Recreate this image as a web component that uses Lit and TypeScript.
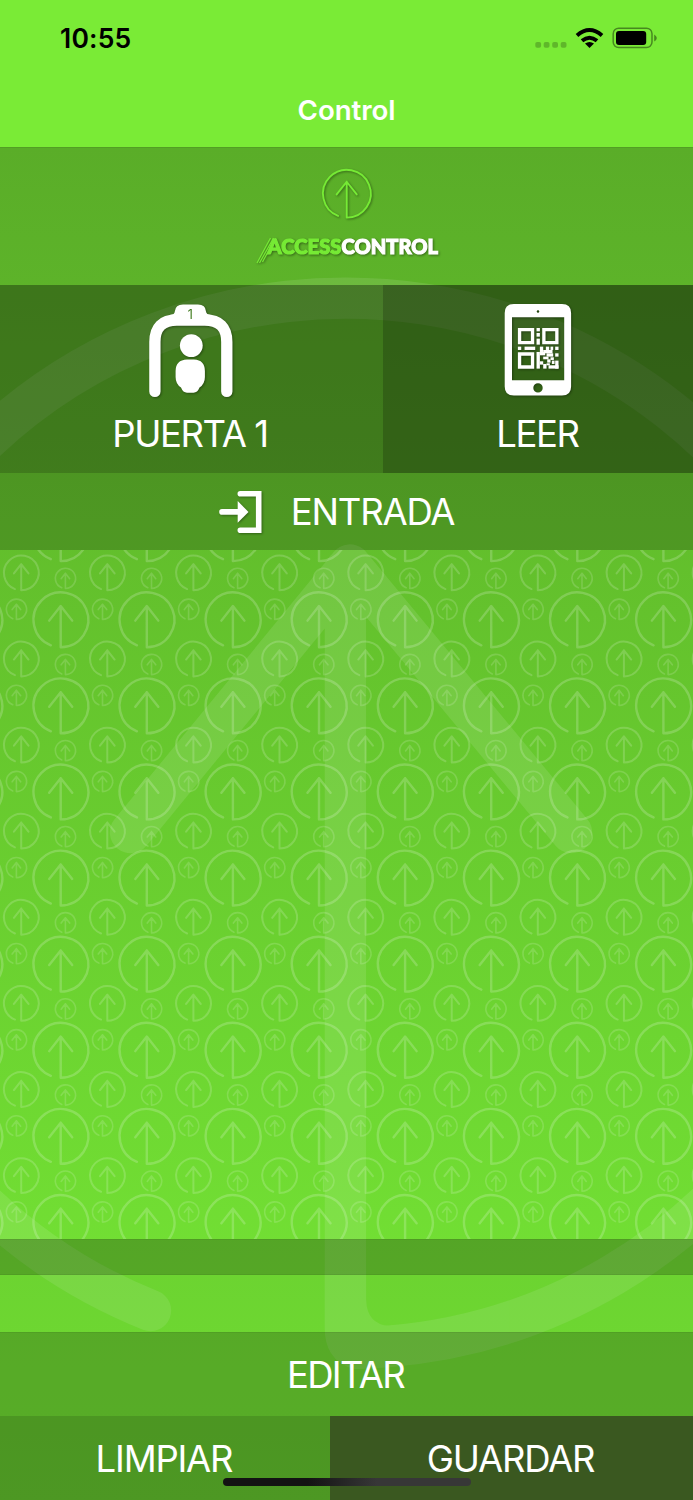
import { LitElement, html, svg, css } from "lit";
import { customElement } from "lit/decorators.js";

const GLYPH = "M-36 93A100 100 0 1 1 0 100V-50M-42 3L0 -50L42 3";

@customElement("arrow-pattern")
class ArrowPattern extends LitElement {
  static styles = css`
    :host { display: block; height: 100%; }
    svg { display: block; width: 100%; height: 100%; }
    path { fill: none; stroke: #fff; stroke-linecap: round; stroke-linejoin: round; vector-effect: non-scaling-stroke; }
    .big { stroke-width: 2.4; opacity: 0.19; }
    .mid { stroke-width: 2; opacity: 0.17; }
    .small { stroke-width: 1.6; opacity: 0.15; }
  `;

  private glyph(kind: string, x: number, y: number, r: number) {
    return svg`<path class=${kind} transform="translate(${x} ${y}) scale(${r / 100})" d=${GLYPH}></path>`;
  }

  render() {
    const step = 86.1;
    const items = [];
    for (let row = -1; row < 9; row++) {
      for (let col = -1; col < 9; col++) {
        const x = col * step;
        const y = row * step;
        items.push(
          this.glyph("big", x + 60.7, y + 69.8, 27.4),
          this.glyph("mid", x + 21.2, y + 22.9, 17.4),
          this.glyph("small", x + 65.4, y + 28.4, 10.1),
          this.glyph("small", x + 16.4, y + 59.3, 10.1)
        );
      }
    }
    return html`<svg>${items}</svg>`;
  }
}

@customElement("status-bar")
class StatusBar extends LitElement {
  static styles = css`
    :host { display: flex; justify-content: space-between; align-items: center; height: 76px; padding: 0 35px 0 60px; }
    .time { font-size: 26.5px; font-weight: 600; letter-spacing: 0.2px; color: #000; }
    svg { display: block; }
    .dim { fill: rgba(0, 0, 0, 0.22); }
    .wave { fill: none; stroke: #000; stroke-width: 4; }
    .shell { fill: none; stroke: rgba(0, 0, 0, 0.42); stroke-width: 1.5; }
    .nub { fill: rgba(0, 0, 0, 0.42); }
  `;

  render() {
    return html`
      <span class="time">10:55</span>
      <svg width="124" height="24" viewBox="534 26 124 24">
        ${[535.3, 543.7, 552.2, 560.7].map(
          (x) => svg`<rect class="dim" x=${x} y="42" width="5.8" height="5.8" rx="1.8"></rect>`
        )}
        <path class="wave" d="M577 35.4Q589.5 24.6 602 35.4M582 40.8Q589.5 34.6 597 40.8"></path>
        <path d="M585 43.6Q589.5 40.6 594 43.6L589.5 48Z"></path>
        <rect class="shell" x="613.2" y="28.2" width="38.8" height="19.4" rx="5.5"></rect>
        <rect x="616" y="31" width="30.2" height="14" rx="3"></rect>
        <path class="nub" d="M654.2 34.5Q656.8 36 656.8 38T654.2 41.5Z"></path>
      </svg>
    `;
  }
}

@customElement("app-root")
class AppRoot extends LitElement {
  static styles = css`
    :host {
      display: grid;
      grid-template: 1500px / 693px;
      overflow: hidden;
      font-family: Inter, "Liberation Sans", sans-serif;
      color: #fff;
      background: linear-gradient(#5aad28 147px, #77ea36 1500px);
    }
    .backdrop { grid-area: 1 / 1; display: block; }
    .backdrop g { opacity: 0.1; }
    .backdrop path { fill: none; stroke: #fff; stroke-width: 41.4; stroke-linecap: round; stroke-linejoin: round; }
    .backdrop .fillet { fill: #fff; stroke: none; }
    .screen {
      grid-area: 1 / 1;
      display: grid;
      grid-template-rows: 147px 137.5px 188px 77.5px 688.7px 36.6px 56.7px 84px 84px;
      min-width: 0;
    }
    .header { background: #7aeb36; }
    .title { display: flex; justify-content: center; font-size: 27.7px; line-height: 34px; padding-top: 17.4px; font-weight: 600; letter-spacing: -0.1px; }
    .brand { display: flex; justify-content: center; align-items: flex-start; box-shadow: inset 0 1px rgba(0, 0, 0, 0.08); }
    .brand svg { display: block; filter: drop-shadow(1px 1px 1px rgba(0, 0, 0, 0.4)); }
    .mark { fill: none; stroke: #76ea35; stroke-linecap: round; stroke-linejoin: round; stroke-width: 1.9; vector-effect: non-scaling-stroke; }
    .slash { stroke: #76ea35; stroke-width: 1.2; }
    .word { font-family: Lato, sans-serif; font-weight: 900; font-size: 21.5px; stroke-width: 1.2; }
    .access { fill: #76ea35; stroke: #76ea35; }
    .control { fill: #fff; stroke: #fff; }
    .row { display: grid; }
    .doors { grid-template-columns: 383px 1fr; }
    .tile { display: flex; flex-direction: column; align-items: center; gap: 12px; padding-top: 15.5px; }
    .door { background: rgba(0, 0, 0, 0.34); }
    .read { background: rgba(0, 0, 0, 0.47); }
    .tile svg, .entry svg { display: block; filter: drop-shadow(1px 1px 1px rgba(0, 0, 0, 0.35)); }
    .label { font-size: 36.5px; line-height: 44px; font-weight: 400; letter-spacing: -1.4px; white-space: pre; }
    .door .label { padding-right: 3px; }
    .door svg { margin-right: 2px; }
    .read { padding-right: 1px; }
    .entry .label { letter-spacing: -1.2px; }
    .white { fill: #fff; }
    .leg { fill: none; stroke: #fff; stroke-width: 11.3; stroke-linecap: round; }
    .num { font-size: 12.5px; fill: #3f7a1d; }
    .entry { display: flex; align-items: center; background: rgba(0, 0, 0, 0.2); padding-left: 216px; padding-top: 1px; gap: 24.8px; }
    .bracket { fill: none; stroke: #fff; stroke-width: 5.6; stroke-linecap: round; stroke-linejoin: miter; }
    .field { overflow: hidden; min-height: 0; }
    .bar { background: rgba(0, 0, 0, 0.255); box-shadow: inset 0 1px rgba(0, 0, 0, 0.06), inset 0 -1px rgba(0, 0, 0, 0.06); }
    .gap { background: rgba(0, 0, 0, 0.05); }
    .edit { background: rgba(0, 0, 0, 0.25); display: flex; justify-content: center; align-items: center; padding: 2px 2px 0 0; box-sizing: border-box; box-shadow: inset 0 1px rgba(0, 0, 0, 0.06); }
    .edit .label { letter-spacing: -1.7px; }
    .actions { display: grid; grid-template-columns: 330px 1fr; grid-template-rows: 84px; }
    .action { grid-row: 1; display: flex; justify-content: center; align-items: center; padding: 2px 2px 0 0; box-sizing: border-box; }
    .action .label { letter-spacing: -1.2px; }
    .clear { grid-column: 1; background: rgba(0, 0, 0, 0.35); }
    .save { grid-column: 2; background: #3a5820; }
    .home { grid-row: 1; grid-column: 1 / 3; align-self: end; justify-self: center; width: 248px; height: 8.5px; margin-bottom: 13.5px; border-radius: 5px; background: linear-gradient(90deg, #131313 34%, #373737 62%); }
  `;

  private qr() {
    const blocks = [
      [56, 0, 10, 10], [56, 15, 10, 11], [56, 32, 10, 18],
      [0, 56, 10, 10], [20, 56, 32, 10],
      [56, 72, 10, 50], [66, 56, 10, 16], [84, 56, 10, 10], [98, 56, 8, 10], [112, 56, 10, 10],
      [76, 66, 28, 10], [66, 72, 16, 10], [86, 76, 20, 10], [112, 76, 10, 10], [76, 86, 16, 8],
      [98, 88, 10, 8], [88, 94, 10, 10], [66, 100, 10, 10], [102, 98, 8, 10], [112, 98, 10, 24],
      [76, 108, 10, 14], [86, 106, 10, 6], [92, 112, 30, 10],
    ];
    const finders = [[0, 0], [73, 0], [0, 73]];
    return svg`<g transform="translate(517.4 328) scale(.333)">
      ${finders.map(([x, y]) => svg`<path class="white" fill-rule="evenodd" d="M${x} ${y}h49v49h-49zM${x + 10} ${y + 10}v29h29v-29z"></path>`)}
      ${blocks.map(([x, y, w, h]) => svg`<rect class="white" x=${x} y=${y} width=${w} height=${h}></rect>`)}
    </g>`;
  }

  render() {
    return html`
      <svg class="backdrop" width="693" height="1500">
        <g>
          <path d="M150.5 1310.5A525 525 0 1 1 387 1346.5L358 1348.3Q345.4 1346 345.4 1328V570M130.5 832.5L350 565L571.5 832.5"></path>
          <path class="fillet" d="M364 1300H366.1Q367 1324 389 1326V1330H364Z"></path>
        </g>
      </svg>
      <div class="screen">
        <div class="header">
          <status-bar></status-bar>
          <div class="title">Control</div>
        </div>
        <div class="brand">
          <svg width="300" height="125" viewBox="196.5 147 300 125">
            <path class="mark" transform="translate(346.2 193.7) scale(.239)" d=${GLYPH}></path>
            <path class="slash" d="M256.5 263L270 238M259 263L273 238M262 262L275 238"></path>
            <text class="word access" x="267" y="253.6" textLength="74" lengthAdjust="spacingAndGlyphs">ACCESS</text>
            <text class="word control" x="341" y="253.6" textLength="96.5" lengthAdjust="spacingAndGlyphs">CONTROL</text>
          </svg>
        </div>
        <div class="row doors">
          <div class="tile door">
            <svg width="90" height="100" viewBox="146 300 90 100">
              <path class="leg" d="M154.9 391.4V342Q154.9 320 177 320H204.7Q226.8 320 226.8 342V391.4"></path>
              <path class="white" d="M170 315Q174.8 314.5 174.8 311.5Q175.5 304.6 183 304.6H198Q205.5 304.6 206 311.5Q206.2 314.5 211 315V322H170Z"></path>
              <text class="num" x="190.3" y="319" text-anchor="middle">1</text>
              <circle class="white" cx="191.3" cy="345.6" r="11.4"></circle>
              <path class="white" d="M187 359.5H194Q204.9 360 204.9 371V377Q204.9 384 199.5 387.5Q197.5 392.7 193.5 392.7H187Q183 392.7 181 387.5Q175.6 384 175.6 377V371Q175.6 360 187 359.5Z"></path>
            </svg>
            <span class="label">PUERTA 1</span>
          </div>
          <div class="tile read">
            <svg width="80" height="100" viewBox="497.5 300 80 100">
              <path class="white" fill-rule="evenodd" d="M513.3 304H561.5Q570.6 304 570.6 313V386.5Q570.6 395.6 561.5 395.6H513.3Q504.2 395.6 504.2 386.5V313Q504.2 304 513.3 304ZM511.5 317.3V380.3H563.7V317.3ZM537.5 383.2A4.7 4.7 0 1 0 537.5 392.6A4.7 4.7 0 1 0 537.5 383.2ZM537.5 310.2A1.3 1.3 0 1 0 537.5 312.8A1.3 1.3 0 1 0 537.5 310.2Z"></path>
              ${this.qr()}
            </svg>
            <span class="label">LEER</span>
          </div>
        </div>
        <div class="row entry">
          <svg width="50" height="50" viewBox="216 486.5 50 50">
            <path class="bracket" d="M240.3 493.2H258.7V529.8H240.3M222 511.4H240"></path>
            <path class="white" d="M237.7 500.5L248.5 511.4L237.7 522.3Z"></path>
          </svg>
          <span class="label">ENTRADA</span>
        </div>
        <div class="field"><arrow-pattern></arrow-pattern></div>
        <div class="bar"></div>
        <div class="gap"></div>
        <div class="edit"><span class="label">EDITAR</span></div>
        <div class="actions">
          <div class="action clear"><span class="label">LIMPIAR</span></div>
          <div class="action save"><span class="label">GUARDAR</span></div>
          <div class="home"></div>
        </div>
      </div>
    `;
  }
}
